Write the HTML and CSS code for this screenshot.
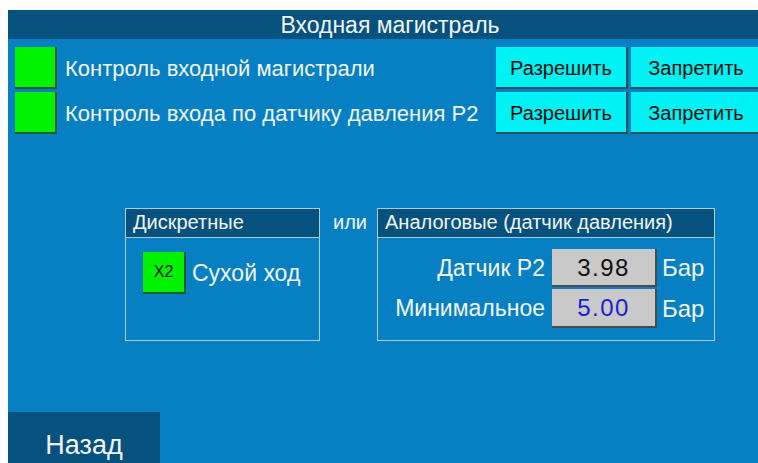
FILE: index.html
```html
<!DOCTYPE html>
<html lang="ru">
<head>
<meta charset="utf-8">
<title>Входная магистраль</title>
<link rel="stylesheet" href="styles.css">
</head>
<body>
<div class="screen">
  <div class="title">Входная магистраль</div>

  <div class="controls">
    <div class="lamp"></div>
    <div class="label">Контроль входной магистрали</div>
    <div class="btn">Разрешить</div>
    <div class="btn">Запретить</div>

    <div class="lamp"></div>
    <div class="label">Контроль входа по датчику давления P2</div>
    <div class="btn">Разрешить</div>
    <div class="btn">Запретить</div>
  </div>

  <div class="modes">
    <div class="group discrete">
      <div class="group-head">Дискретные</div>
      <div class="discrete-body">
        <div class="lamp small">X2</div>
        <div class="dry">Сухой ход</div>
      </div>
    </div>
    <div class="or">или</div>
    <div class="group analog">
      <div class="group-head">Аналоговые (датчик давления)</div>
      <div class="analog-body">
        <div class="a-label">Датчик P2</div>
        <div class="value">3.98</div>
        <div class="unit">Бар</div>
        <div class="a-label">Минимальное</div>
        <div class="value input">5.00</div>
        <div class="unit">Бар</div>
      </div>
    </div>
  </div>

  <div class="footer">
    <div class="back">Назад</div>
  </div>
</div>
</body>
</html>
```

FILE: styles.css
```css
html, body {
  margin: 0;
  padding: 0;
  background: #ffffff;
  overflow: hidden;
}

body {
  padding: 10px 0 0 8px;
  font-family: "Liberation Sans", Arial, sans-serif;
}

.screen {
  width: 750px;
  height: 453px;
  background: #0680c3;
  color: #f2f6f8;
  display: flex;
  flex-direction: column;
  overflow: hidden;
}

.title {
  height: 29px;
  flex: none;
  background: #06517e;
  font-size: 23px;
  line-height: 30px;
  text-align: center;
  padding-left: 14px;
  white-space: nowrap;
}

/* two control rows: lamp, caption, two command buttons */
.controls {
  margin-top: 8px;
  padding-left: 7px;
  display: grid;
  grid-template-columns: 42px 433px 132px 132px;
  grid-auto-rows: 42px;
  column-gap: 3px;
  row-gap: 3px;
}

.controls .label {
  font-size: 22px;
  line-height: 43px;
  padding-left: 5px;
  white-space: nowrap;
}

.lamp {
  background: #00f200;
  box-sizing: border-box;
  border-right: 2px solid #255a2c;
  border-bottom: 2px solid #255a2c;
}

.btn {
  background: #00f2f4;
  color: #0a0a0a;
  box-sizing: border-box;
  border-right: 2px solid #2a4f5a;
  border-bottom: 2px solid #2a4f5a;
  font-size: 20px;
  line-height: 42px;
  text-align: center;
  white-space: nowrap;
}

.modes {
  margin-top: 74px;
  padding-left: 117px;
  display: flex;
  align-items: flex-start;
}

.group {
  box-sizing: border-box;
  height: 133px;
  border: 1px solid #a9cde3;
}

.discrete { width: 195px; }
.analog { width: 338px; }

.group-head {
  height: 28px;
  background: #06517e;
  border-bottom: 1px solid #a9cde3;
  font-size: 20px;
  line-height: 27px;
  padding-left: 7px;
  white-space: nowrap;
}

.discrete-body {
  padding: 14px 0 0 17px;
  display: flex;
  align-items: center;
  gap: 6px;
}

.lamp.small {
  width: 43px;
  height: 42px;
  color: #0a0a0a;
  font-size: 16px;
  line-height: 40px;
  text-align: center;
}

.dry {
  font-size: 23px;
  white-space: nowrap;
}

.or {
  width: 35px;
  margin: 0 9px 0 13px;
  font-size: 20px;
  line-height: 29px;
  white-space: nowrap;
}

.analog-body {
  padding: 11px 0 0 0;
  display: grid;
  grid-template-columns: 169px 105px auto;
  grid-template-rows: 38px 39px;
  row-gap: 2px;
  column-gap: 5px;
  align-items: center;
}

.a-label {
  font-size: 23px;
  text-align: right;
  padding-right: 2px;
  white-space: nowrap;
}

.value {
  height: 100%;
  box-sizing: border-box;
  background: #c9c9c9;
  border-right: 2px solid #4a4a4a;
  border-bottom: 2px solid #4a4a4a;
  color: #111111;
  font-size: 24px;
  letter-spacing: 1.5px;
  text-align: center;
  line-height: 37px;
}

.value.input {
  color: #1c1ed0;
}

.unit {
  font-size: 24px;
}

.footer {
  margin-top: auto;
  flex: none;
}

.back {
  width: 152px;
  height: 51px;
  background: #06517e;
  font-size: 27px;
  line-height: 66px;
  text-align: center;
  box-sizing: border-box;
  overflow: hidden;
}
```
